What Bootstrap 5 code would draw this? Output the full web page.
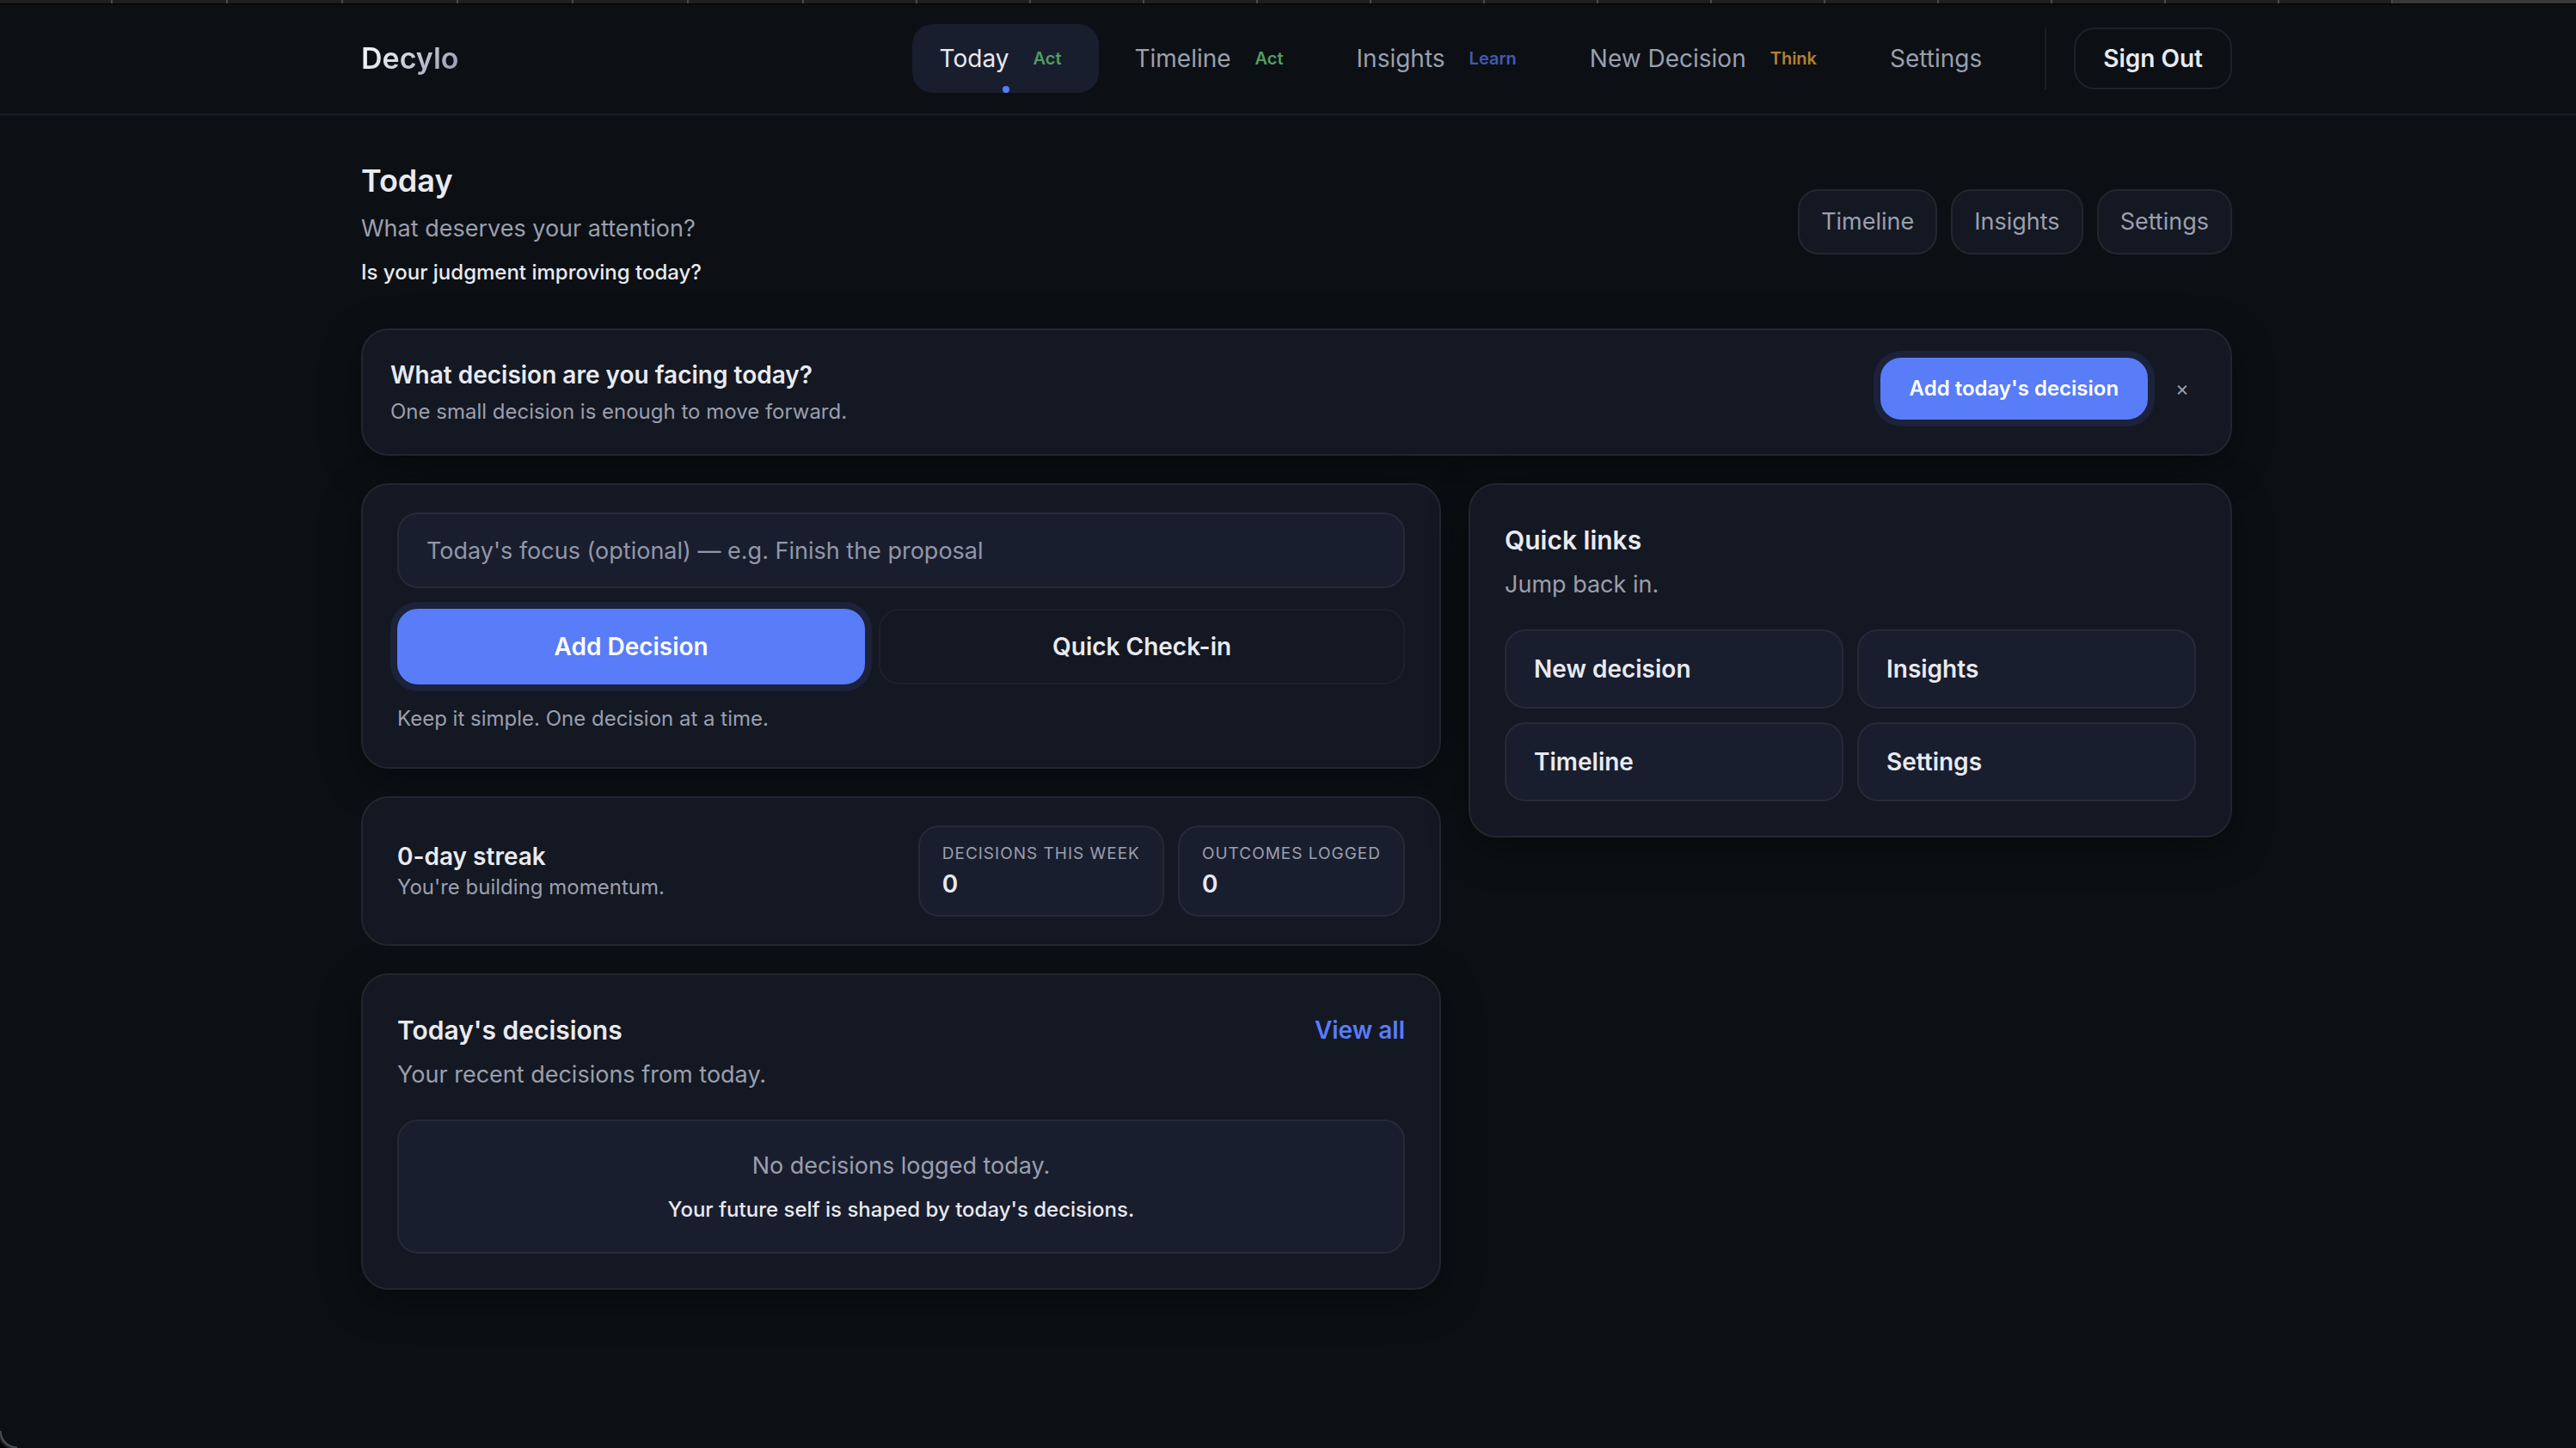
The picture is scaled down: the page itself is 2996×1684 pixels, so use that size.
<!DOCTYPE html>
<html lang="en">
<head>
<meta charset="utf-8">
<meta name="viewport" content="width=device-width, initial-scale=1">
<title>Decylo – Today</title>
<link href="https://cdn.jsdelivr.net/npm/bootstrap@5.3.0/dist/css/bootstrap.min.css" rel="stylesheet">
<style>
:root{--ink:#e8eaf0;--dim:#9a9fae;--panel:#141822;--soft:#191e2e;--line:#22262f;--accent:#597cf9;}
body{background:#0c1014;color:var(--ink);font-family:Inter,"Liberation Sans",sans-serif;font-size:27px;line-height:40px;min-height:100vh}
h1,h2,h3,p{margin:0;line-height:40px}
a{text-decoration:none}
.tabstrip{height:5px;border-bottom:1px solid #000;background:#383838}
.tabs-a{width:935px;background:repeating-linear-gradient(90deg,#1f1f1f 0 129px,#4a4a4a 129px 131px,#1f1f1f 131px 134px)}
.tabs-b{width:1848px;background:repeating-linear-gradient(90deg,#1f1f1f 0 130px,#4a4a4a 130px 132px)}
.shell{width:100%;max-width:2240px;margin:0 auto;padding:0 32px}
.offset-window{padding-left:20px}
.topbar{border-bottom:2px solid #1a1d23;padding:23px 0 24px 20px}
.brand{font-size:34px;font-weight:600;line-height:48px;background:linear-gradient(135deg,#f0f1f5 20%,#8b93a7 100%);-webkit-background-clip:text;background-clip:text;color:transparent}
.menu{gap:9px}
.menu .nav-link{position:relative;display:flex;align-items:center;gap:16px;height:80px;padding:0 32px;border-radius:24px;color:var(--dim);font-size:28px}
.menu .nav-link.active{background:var(--soft);color:var(--ink)}
.menu .nav-link.active::after{content:"";position:absolute;bottom:0;left:50%;width:8px;height:8px;margin-left:-4px;border-radius:50%;background:var(--accent)}
.tag{font-size:20px;font-weight:600;padding:0 12px;line-height:28px}
.tag-act{color:#4f9d62}.tag-learn{color:#4259b5}.tag-think{color:#b48035}
.rule{width:2px;height:72px;background:#1a1d23;margin:0 32px 0 41px}
.btn{border-width:2px;border-radius:24px;font-weight:600}
.btn-line{border-color:#1e2129;color:var(--ink);font-size:28px;line-height:40px;padding:14px 32px}
.btn-fill{background:var(--accent);color:#fff;border-color:var(--accent);box-shadow:0 0 0 8px #1b223a}
.h-page{font-size:36px;line-height:56px;font-weight:600}
.h-card{font-size:30px;line-height:48px;font-weight:600}
.h-row{font-size:28px;font-weight:600}
.dim{color:var(--dim)}
.note{font-size:24px;line-height:34px;font-weight:500;margin-top:14px}
.fine{font-size:24px;line-height:34px;color:var(--dim)}
.page-head{padding-top:48px;margin-bottom:48px}
.pill{border:2px solid var(--line);background:var(--panel);border-radius:24px;padding:16px 25px;color:var(--dim)}
.gap-16{gap:16px}
.panel{background:var(--panel);border:2px solid var(--line);border-radius:32px;padding:40px}
.lift{box-shadow:0 12px 48px rgba(0,0,0,.4)}
.banner{padding:32px;margin-bottom:32px}
.banner .fine{margin-top:6px}
.banner .btn-fill{font-size:24px;line-height:40px;padding:14px 32px}
.closer{background:none;border:0;color:var(--dim);font-size:24px;line-height:40px;padding:16px 16px 16px 0;margin-left:32px}
.board{--bs-gutter-x:32px}
.stack{gap:32px}
.focus-card{padding:32px 40px 36px}
.focus-box,.focus-box:focus{height:88px;background:var(--soft);border:2px solid #252a38;border-radius:24px;padding:0 32px;font-size:27px;color:var(--ink)}
.focus-box::placeholder{color:#9297a8;opacity:1}
.act-row{gap:16px;margin-top:24px}
.act-row .btn{font-size:28px;line-height:40px;height:88px;padding:0}
.grow-a{flex:8 1 0}.grow-b{flex:9 1 0}
.focus-card .fine{margin-top:20px;line-height:40px}
.streak{padding:32px 40px}
.streak .h-row{line-height:38px}
.tile{background:var(--soft);border:2px solid #252a38;border-radius:24px}
.stat{padding:16px 26px}
.stat dt{font-size:19px;line-height:30px;font-weight:400;color:var(--dim);text-transform:uppercase;letter-spacing:1px}
.stat dd{margin:0;font-size:28px;font-weight:600}
.more{color:var(--accent);font-size:28px;font-weight:600;line-height:48px}
.empty{margin-top:32px;padding:32px}
.jump{--bs-gutter-x:16px;--bs-gutter-y:16px;margin-top:16px}
.jump a{display:block;padding:24px 32px;color:var(--ink);font-size:28px;font-weight:600}
.corner{position:fixed;left:0;bottom:0;width:20px;height:20px;background:radial-gradient(circle at 20px 0,transparent 18px,#55585c 19px,#1b1c1e 22px,#000 24px)}
</style>
<script src="https://cdn.jsdelivr.net/npm/bootstrap@5.3.0/dist/js/bootstrap.bundle.min.js" defer></script>
</head>
<body>
<div class="tabstrip d-flex"><div class="tabs-a"></div><div class="tabs-b"></div></div>
<header class="topbar">
  <div class="shell d-flex align-items-center justify-content-between">
    <a class="brand" href="#">Decylo</a>
    <div class="d-flex align-items-center">
      <nav class="nav menu" aria-label="Main">
        <a class="nav-link active" href="#" aria-current="page">Today<span class="tag tag-act">Act</span></a>
        <a class="nav-link" href="#">Timeline<span class="tag tag-act">Act</span></a>
        <a class="nav-link" href="#">Insights<span class="tag tag-learn">Learn</span></a>
        <a class="nav-link" href="#">New Decision<span class="tag tag-think">Think</span></a>
        <a class="nav-link" href="#">Settings</a>
      </nav>
      <div class="rule"></div>
      <button class="btn btn-line" type="button">Sign Out</button>
    </div>
  </div>
</header>
<div class="offset-window">
<main class="shell">
  <div class="page-head d-flex align-items-center justify-content-between">
    <div>
      <h1 class="h-page">Today</h1>
      <p class="dim mt-2">What deserves your attention?</p>
      <p class="note">Is your judgment improving today?</p>
    </div>
    <div class="d-flex gap-16">
      <a class="pill" href="#">Timeline</a>
      <a class="pill" href="#">Insights</a>
      <a class="pill" href="#">Settings</a>
    </div>
  </div>

  <section class="panel lift banner d-flex align-items-start justify-content-between">
    <div>
      <h2 class="h-row">What decision are you facing today?</h2>
      <p class="fine">One small decision is enough to move forward.</p>
    </div>
    <div class="d-flex">
      <button class="btn btn-fill" type="button">Add today's decision</button>
      <button class="closer" type="button" aria-label="Dismiss">×</button>
    </div>
  </section>

  <div class="row board align-items-start">
    <div class="col-7 d-flex flex-column stack">
      <section class="panel lift focus-card">
        <input class="form-control focus-box" type="text" aria-label="Today's focus" placeholder="Today's focus (optional) — e.g. Finish the proposal">
        <div class="d-flex act-row">
          <button class="btn btn-fill grow-a" type="button">Add Decision</button>
          <button class="btn btn-line grow-b" type="button">Quick Check-in</button>
        </div>
        <p class="fine">Keep it simple. One decision at a time.</p>
      </section>

      <section class="panel streak d-flex align-items-center justify-content-between">
        <div>
          <h2 class="h-row">0-day streak</h2>
          <p class="fine">You're building momentum.</p>
        </div>
        <div class="d-flex gap-16">
          <dl class="tile stat mb-0"><dt>Decisions this week</dt><dd>0</dd></dl>
          <dl class="tile stat mb-0"><dt>Outcomes logged</dt><dd>0</dd></dl>
        </div>
      </section>

      <section class="panel lift">
        <div class="d-flex justify-content-between">
          <h2 class="h-card">Today's decisions</h2>
          <a class="more" href="#">View all</a>
        </div>
        <p class="dim mt-2">Your recent decisions from today.</p>
        <div class="tile empty text-center">
          <p class="dim">No decisions logged today.</p>
          <p class="note">Your future self is shaped by today's decisions.</p>
        </div>
      </section>
    </div>

    <div class="col-5">
      <section class="panel lift">
        <h2 class="h-card">Quick links</h2>
        <p class="dim mt-2">Jump back in.</p>
        <div class="row jump">
          <div class="col-6"><a class="tile" href="#">New decision</a></div>
          <div class="col-6"><a class="tile" href="#">Insights</a></div>
          <div class="col-6"><a class="tile" href="#">Timeline</a></div>
          <div class="col-6"><a class="tile" href="#">Settings</a></div>
        </div>
      </section>
    </div>
  </div>
</main>
</div>
<div class="corner"></div>
</body>
</html>
